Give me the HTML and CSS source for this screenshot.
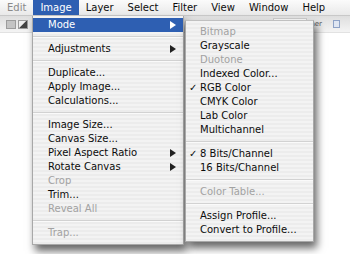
FILE: index.html
```html
<!DOCTYPE html>
<html lang="en">
  <head>
    <meta charset="UTF-8" />
    <title>Image menu</title>
    <link rel="stylesheet" href="styles.css">
  </head>
  <body>
    <div class="screen">
      <nav class="menubar">
        <span class="title">Edit</span>
        <span class="title active">Image</span>
        <span class="title">Layer</span>
        <span class="title">Select</span>
        <span class="title">Filter</span>
        <span class="title">View</span>
        <span class="title">Window</span>
        <span class="title">Help</span>
      </nav>
      <div class="toolbar">
        <div class="tools">
          <span class="tool"></span>
          <span class="tool dark"></span>
        </div>
        <div class="options">
          <span class="field"></span>
          <span class="hint">her</span>
          <span class="tool small"></span>
        </div>
      </div>

      <div class="menu main">
        <div class="item selected">Mode <span class="arrow"></span></div>
        <div class="sep"></div>
        <div class="item">Adjustments <span class="arrow"></span></div>
        <div class="sep"></div>
        <div class="item">Duplicate...</div>
        <div class="item">Apply Image...</div>
        <div class="item">Calculations...</div>
        <div class="sep"></div>
        <div class="item">Image Size...</div>
        <div class="item">Canvas Size...</div>
        <div class="item">Pixel Aspect Ratio <span class="arrow"></span></div>
        <div class="item">Rotate Canvas <span class="arrow"></span></div>
        <div class="item off">Crop</div>
        <div class="item">Trim...</div>
        <div class="item off">Reveal All</div>
        <div class="sep"></div>
        <div class="item off">Trap...</div>
      </div>

      <div class="menu sub">
        <div class="item off"><span class="check"></span>Bitmap</div>
        <div class="item"><span class="check"></span>Grayscale</div>
        <div class="item off"><span class="check"></span>Duotone</div>
        <div class="item"><span class="check"></span>Indexed Color...</div>
        <div class="item"><span class="check">&#10003;</span>RGB Color</div>
        <div class="item"><span class="check"></span>CMYK Color</div>
        <div class="item"><span class="check"></span>Lab Color</div>
        <div class="item"><span class="check"></span>Multichannel</div>
        <div class="sep"></div>
        <div class="item"><span class="check">&#10003;</span>8 Bits/Channel</div>
        <div class="item"><span class="check"></span>16 Bits/Channel</div>
        <div class="sep"></div>
        <div class="item off"><span class="check"></span>Color Table...</div>
        <div class="sep"></div>
        <div class="item"><span class="check"></span>Assign Profile...</div>
        <div class="item"><span class="check"></span>Convert to Profile...</div>
      </div>
    </div>
  </body>
</html>
```

FILE: styles.css
```css
body,
html {
  margin: 0;
  padding: 0;
  background-color: #fff;
  font-family: "DejaVu Sans", sans-serif;
  font-size: 10px;
  color: #0c0c0c;
}
.screen {
  position: relative;
  width: 350px;
  height: 254px;
  overflow: hidden;
  background: #fff;
}
.menubar {
  display: flex;
  height: 16px;
  line-height: 16px;
  background: linear-gradient(#fbfbfb, #e9e9e9);
  border-bottom: 1px solid #c8c8c8;
  box-sizing: border-box;
}
.title {
  padding: 0 7px;
  white-space: nowrap;
}
.title:first-child {
  color: #8a8a8a;
}
.title.active {
  background-color: #2e5fb2;
  color: #fff;
}
.toolbar {
  display: flex;
  justify-content: space-between;
  align-items: center;
  height: 16px;
  background: linear-gradient(#dedede, #f4f4f4);
  border-bottom: 1px solid #e2e2e2;
}
.tools {
  display: flex;
  gap: 2px;
  padding-left: 6px;
}
.tool {
  width: 8px;
  height: 7px;
  background: #c4c4c4;
  border: 1px solid #9c9c9c;
}
.tool.dark {
  background: linear-gradient(135deg, #eee 45%, #444 50%);
}
.options {
  display: flex;
  align-items: center;
  gap: 3px;
  padding-right: 10px;
}
.field {
  width: 32px;
  height: 11px;
  background: #f6f6f6;
  border: 1px solid #c9c9c9;
}
.hint {
  font-size: 7px;
  color: #555;
}
.tool.small {
  width: 5px;
  height: 6px;
  background: #dfe6f2;
  border-color: #8ea2c6;
  margin-left: 8px;
}
.menu {
  position: absolute;
  box-sizing: border-box;
  background: repeating-linear-gradient(#f3f3f3 0 2px, #ececec 2px 4px);
  border: 1px solid #a8a8a8;
  border-top: none;
  box-shadow: 3px 6px 8px rgba(0, 0, 0, 0.6);
}
.main {
  left: 32px;
  top: 16px;
  width: 152px;
  padding: 2px 0 4px;
}
.sub {
  left: 185px;
  top: 20px;
  width: 129px;
  padding: 4px 0 4px;
  border-top: 1px solid #c0c0c0;
}
.item {
  display: flex;
  align-items: center;
  justify-content: space-between;
  height: 14px;
  line-height: 14px;
  white-space: nowrap;
}
.main .item {
  padding: 0 7px 0 15px;
}
.sub .item {
  justify-content: flex-start;
  padding-left: 3px;
}
.item.selected {
  background-color: #2e5fb2;
  color: #fff;
}
.item.off {
  color: #a2a2a2;
}
.check {
  width: 11px;
  font-size: 10px;
}
.arrow {
  width: 0;
  height: 0;
  border-top: 4px solid transparent;
  border-bottom: 4px solid transparent;
  border-left: 6px solid #222;
}
.selected .arrow {
  border-left-color: #fff;
}
.sep {
  height: 10px;
  background: linear-gradient(transparent 4px, #d2d2d2 4px 5px, #fafafa 5px 6px, transparent 6px);
}
```
